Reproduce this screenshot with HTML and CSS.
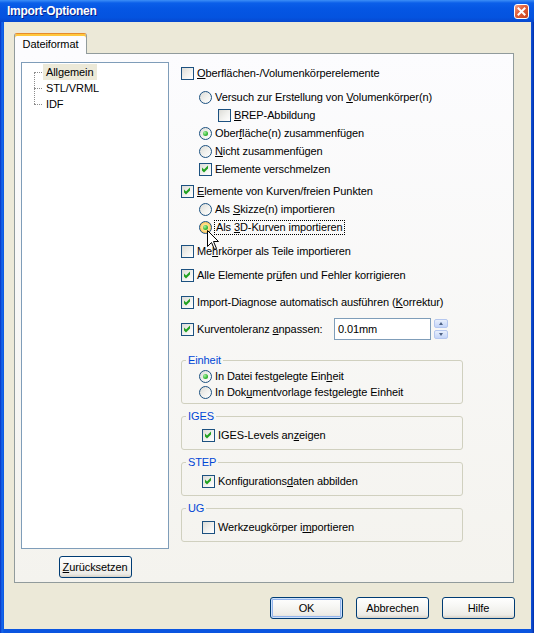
FILE: index.html
```html
<!DOCTYPE html>
<html lang="de">

<head>
  <meta charset="UTF-8" />
  <title>Import-Optionen</title>
  <link rel="stylesheet" href="styles.css">
</head>

<body>
  <div class="window" role="dialog" aria-label="Import-Optionen">
    <div class="titlebar">
      <span class="title">Import-Optionen</span>
      <span class="close-btn" aria-label="Schließen">
        <svg width="13" height="13" viewBox="0 0 13 13">
          <path d="M3.5 3.5 L9.5 9.5 M9.5 3.5 L3.5 9.5" stroke="#fff" stroke-width="2" stroke-linecap="square" />
        </svg>
      </span>
    </div>

    <div class="client">
      <div class="tabs">
        <div class="tab active">Dateiformat</div>
      </div>

      <div class="tab-panel">
        <div class="left-col">
          <div class="tree">
            <ul class="tree-list">
              <li class="selected"><span>Allgemein</span></li>
              <li><span>STL/VRML</span></li>
              <li><span>IDF</span></li>
            </ul>
          </div>
          <button type="button" class="btn btn-reset"><u>Z</u>urücksetzen</button>
        </div>

        <div class="options">
          <div class="row first"><span class="box"></span><span><u>O</u>berflächen-/Volumenkörperelemente</span></div>
          <div class="sub sub-first">
            <div class="row"><span class="radio"></span><span>Versuch zur Erstellung von <u>V</u>olumenkörper(n)</span></div>
            <div class="sub nested">
              <div class="row"><span class="box"></span><span><u>B</u>REP-Abbildung</span></div>
            </div>
            <div class="row"><span class="radio checked"></span><span>Ober<u>f</u>läche(n) zusammenfügen</span></div>
            <div class="row"><span class="radio"></span><span><u>N</u>icht zusammenfügen</span></div>
            <div class="row"><span class="box checked"></span><span>Elemente verschmelzen</span></div>
          </div>

          <div class="row spaced-sm"><span class="box checked"></span><span><u>E</u>lemente von Kurven/freien Punkten</span></div>
          <div class="sub">
            <div class="row"><span class="radio"></span><span>Als <u>S</u>kizze(n) importieren</span></div>
            <div class="row has-cursor">
              <span class="radio checked hover"></span><span class="focus">Als <u>3</u>D-Kurven importieren</span>
              <svg class="cursor" width="13" height="21" viewBox="0 0 13 21">
                <path d="M0.5 0.5 L0.5 16.5 L4.5 12.5 L7.5 19.5 L9.5 18.5 L6.5 11.5 L11.5 11.5 Z" fill="#fff" stroke="#000" stroke-width="1" />
              </svg>
            </div>
          </div>

          <div class="row spaced"><span class="box"></span><span>Me<u>h</u>rkörper als Teile importieren</span></div>
          <div class="row spaced"><span class="box checked"></span><span>Alle Elemente pr<u>ü</u>fen und Fehler korrigieren</span></div>
          <div class="row spaced-lg"><span class="box checked"></span><span>Import-Diagnose automatisch ausführen (<u>K</u>orrektur)</span></div>
          <div class="row spaced tolerance">
            <span class="box checked"></span>
            <span class="tol-label">Kurventoleranz <u>a</u>npassen:</span>
            <input type="text" class="tol-input" value="0.01mm" />
            <span class="spin">
              <span class="spin-btn up"></span>
              <span class="spin-btn down"></span>
            </span>
          </div>

          <fieldset class="group group-first">
            <legend>Einheit</legend>
            <div class="row"><span class="radio checked"></span><span>In Datei festgelegte Ein<u>h</u>eit</span></div>
            <div class="row"><span class="radio"></span><span>In Dok<u>u</u>mentvorlage festgelegte Einheit</span></div>
          </fieldset>

          <fieldset class="group">
            <legend>IGES</legend>
            <div class="row check"><span class="box checked"></span><span>IGES-Levels an<u>z</u>eigen</span></div>
          </fieldset>

          <fieldset class="group">
            <legend>STEP</legend>
            <div class="row check"><span class="box checked"></span><span>Konfigurations<u>d</u>aten abbilden</span></div>
          </fieldset>

          <fieldset class="group">
            <legend>UG</legend>
            <div class="row check"><span class="box"></span><span>Werkzeugkörper i<u>m</u>portieren</span></div>
          </fieldset>
        </div>
      </div>

      <div class="dialog-buttons">
        <button type="button" class="btn btn-default">OK</button>
        <button type="button" class="btn">Abbrechen</button>
        <button type="button" class="btn">Hilfe</button>
      </div>
    </div>
  </div>
</body>

</html>
```

FILE: styles.css
```css
/* Windows XP style dialog */
:root {
  --xp-face: #ece9d8;
  --xp-blue: #0a55e0;
  --xp-tab-border: #919b9c;
  --xp-field-border: #7f9db9;
  --xp-control-border: #1c5180;
  --xp-group-border: #d0d0bf;
  --xp-legend: #0046d5;
  --xp-check: #21a121;
  --font: "Liberation Sans", Arial, sans-serif;
}

*,
*::before,
*::after {
  box-sizing: border-box;
}

body {
  margin: 0;
  font-family: var(--font);
  font-size: 11px;
  letter-spacing: -0.1px;
  color: #000;
  background: var(--xp-blue);
}

u {
  text-decoration-thickness: 1px;
  text-underline-offset: 1px;
}

.window {
  width: 534px;
  height: 633px;
  display: flex;
  flex-direction: column;
  background: linear-gradient(to right, #0831c0 0, #166aee 2px, #0a55e0 4px, #0a55e0 530px, #0d4bd0 532px, #002fa8 534px);
}

/* Title bar */
.titlebar {
  height: 22px;
  flex: none;
  display: flex;
  align-items: center;
  justify-content: space-between;
  padding: 0 5px 0 7px;
  background: linear-gradient(#3d8ff7 0, #0b5fe9 3px, #0556e3 40%, #0453df 80%, #0648cf 100%);
  color: #fff;
}

.title {
  font-weight: 700;
  font-size: 12px;
  letter-spacing: -0.3px;
  text-shadow: 1px 1px #0a1f8a;
}

.close-btn {
  width: 15px;
  height: 15px;
  display: flex;
  align-items: center;
  justify-content: center;
  border: 1px solid #fff;
  border-radius: 3px;
  background: linear-gradient(135deg, #f3a285 0%, #e2613d 40%, #c8421b 100%);
}

/* Client area */
.client {
  flex: 1;
  margin: 0 3px 4px 4px;
  background: var(--xp-face);
  padding: 11px 15px 0 10px;
  display: flex;
  flex-direction: column;
}

.tabs {
  display: flex;
  height: 20px;
}

.tab {
  position: relative;
  z-index: 1;
  width: 73px;
  height: 21px;
  text-align: center;
  line-height: 17px;
  border: 1px solid var(--xp-tab-border);
  border-top: 1px solid #e68b2c;
  border-bottom: none;
  border-radius: 3px 3px 0 0;
  background: #fcfcfe;
  box-shadow: inset 0 2px 0 #ffc73c;
  padding-top: 2px;
}

.tab-panel {
  width: 500px;
  height: 530px;
  border: 1px solid var(--xp-tab-border);
  background: linear-gradient(#fcfcfe, #f4f3ee);
  display: flex;
  gap: 12px;
  padding: 8px 0 0 6px;
}

/* Tree */
.left-col {
  width: 148px;
  display: flex;
  flex-direction: column;
}

.tree {
  height: 487px;
  background: #fff;
  border: 1px solid var(--xp-field-border);
}

.tree-list {
  position: relative;
  list-style: none;
  margin: 0;
  padding: 1px 0 0 21px;
}

.tree-list::before {
  content: "";
  position: absolute;
  left: 12px;
  top: 9px;
  height: 32px;
  border-left: 1px dotted #8c8c8c;
}

.tree-list li {
  position: relative;
  height: 16px;
  line-height: 16px;
}

.tree-list li::before {
  content: "";
  position: absolute;
  left: -9px;
  top: 8px;
  width: 8px;
  border-top: 1px dotted #8c8c8c;
}

.tree-list li span {
  display: inline-block;
  padding: 0 4px 0 3px;
}

.tree-list li.selected span {
  background: var(--xp-face);
}

/* Buttons */
.btn {
  font-family: var(--font);
  font-size: 11px;
  letter-spacing: -0.1px;
  color: #000;
  width: 73px;
  height: 22px;
  padding: 0;
  border: 1px solid #003c74;
  border-radius: 3px;
  background: linear-gradient(#ffffff 0%, #f6f6f3 45%, #ecebe6 85%, #d6d0c5 100%);
}

.btn-reset {
  margin: 7px auto 0;
}

.btn-default {
  box-shadow: inset 0 0 0 1px #cde1fb, inset 0 0 0 2px #93b4ec;
}

.dialog-buttons {
  display: flex;
  justify-content: flex-end;
  gap: 13px;
  margin-top: 14px;
  margin-right: 1px;
}

/* Options */
.options {
  width: 282px;
  display: flex;
  flex-direction: column;
}

.row {
  display: flex;
  align-items: center;
  gap: 3px;
  height: 16px;
  white-space: nowrap;
}

.row.first {
  margin-top: 3px;
}

.row.spaced-sm {
  margin-top: 6px;
}

.row.spaced {
  margin-top: 8px;
}

.row.spaced-lg {
  margin-top: 11px;
}

.sub {
  display: flex;
  flex-direction: column;
  gap: 2px;
  margin-top: 2px;
  padding-left: 18px;
}

.sub.sub-first {
  margin-top: 8px;
}

.sub.nested {
  margin-top: 0;
  padding-left: 19px;
}

.box,
.radio {
  position: relative;
  flex: none;
  width: 13px;
  height: 13px;
  border: 1px solid var(--xp-control-border);
  background: linear-gradient(135deg, #dcdcd7 0%, #f2f2ef 55%, #ffffff 100%);
}

.box.checked::after {
  content: "";
  position: absolute;
  left: 0;
  top: 0;
  width: 11px;
  height: 11px;
  background: var(--xp-check);
  clip-path: polygon(2px 4px, 4px 6px, 8px 2px, 8px 5px, 4px 9px, 2px 7px);
}

.radio {
  border-radius: 50%;
}

.radio.checked::after {
  content: "";
  position: absolute;
  left: 3px;
  top: 3px;
  width: 5px;
  height: 5px;
  border-radius: 50%;
  background: radial-gradient(circle at 35% 35%, #a8f0a4 0%, #3cbc3a 55%, #1e8f1e 100%);
}

.radio.hover {
  background: radial-gradient(circle, #fff7dc 0%, #ffd777 55%, #f5a524 100%);
}

.focus {
  outline: 1px dotted #000;
  padding: 0 1px;
  line-height: 13px;
}

.has-cursor {
  position: relative;
}

.cursor {
  position: absolute;
  left: 8px;
  top: 11px;
  z-index: 2;
}

/* Curve tolerance */
.row.tolerance {
  height: 22px;
}

.tol-label {
  width: 134px;
}

.tol-input {
  width: 97px;
  height: 22px;
  margin: 0;
  border: 1px solid var(--xp-field-border);
  padding: 0 3px;
  font-family: var(--font);
  font-size: 11px;
  letter-spacing: -0.1px;
  color: #000;
  background: #fff;
  outline: none;
}

.spin {
  display: flex;
  flex-direction: column;
  gap: 2px;
  margin-left: 0;
}

.spin-btn {
  position: relative;
  width: 14px;
  height: 9px;
  border: 1px solid #b5c7ef;
  border-radius: 2px;
  background: linear-gradient(#e8effc, #c3d4f8);
}

.spin-btn::after {
  content: "";
  position: absolute;
  left: 4px;
  border-left: 2.5px solid transparent;
  border-right: 2.5px solid transparent;
}

.spin-btn.up::after {
  top: 2px;
  border-bottom: 3px solid #4d6185;
}

.spin-btn.down::after {
  top: 2px;
  border-top: 3px solid #4d6185;
}

/* Group boxes */
.group {
  width: 282px;
  min-width: 0;
  margin: 5px 0 0;
  padding: 4px 0 6px 4px;
  border: 1px solid var(--xp-group-border);
  border-radius: 3px;
}

.group.group-first {
  margin-top: 13px;
  padding-top: 1px;
  padding-bottom: 3px;
}

.group legend {
  padding: 0 2px;
  line-height: 14px;
  color: var(--xp-legend);
}

.group .row {
  margin-left: 13px;
}

.group .row.check {
  margin-left: 16px;
}
```
